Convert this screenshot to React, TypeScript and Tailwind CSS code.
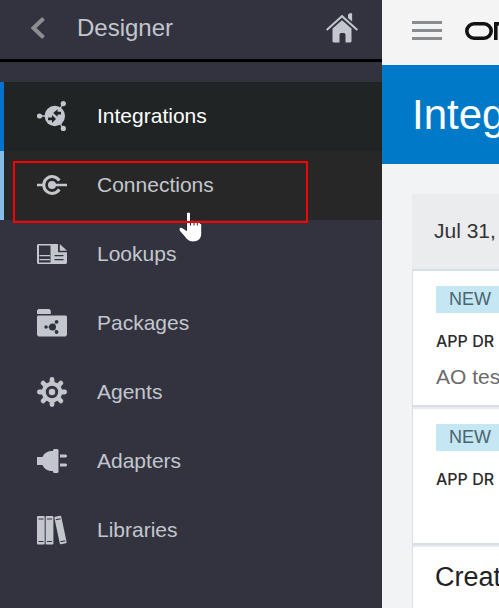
import type { ReactNode } from "react";

const INK = "#c3c7cd";

function IntegrationsIcon() {
  return (
    <svg width="30" height="30" viewBox="0 0 30 30" fill={INK} aria-hidden="true">
      <path d="M3 15h8M19 15l7-12.500M19 15l7 12.500" stroke={INK} strokeWidth="1.300" />
      <circle cx="2.500" cy="15" r="2.600" />
      <circle cx="26.300" cy="2.600" r="2.600" />
      <circle cx="26.300" cy="27.400" r="2.600" />
      <circle cx="17.800" cy="15" r="10.200" />
      <path
        fill="#202424"
        d="M24 10.800v2.600h-3.400v2.400l-4.400-3.700 4.400-3.800v2.500zM11 19.200v-2.600h4v-2.600l4 4-4 4v-2.800z"
      />
    </svg>
  );
}

function ConnectionsIcon() {
  return (
    <svg width="30" height="20" viewBox="0 0 30 20" fill="none" stroke={INK} aria-hidden="true">
      <path d="M22.300 5.600A8.400 8.400 0 1 0 22.300 14.400" strokeWidth="3" />
      <path d="M0 10h6M15 10h15" strokeWidth="2.600" />
      <circle cx="15" cy="10" r="4" fill={INK} stroke="none" />
    </svg>
  );
}

function LookupsIcon() {
  return (
    <svg width="30" height="20" viewBox="0 0 30 20" aria-hidden="true">
      <path fill={INK} d="M1 0h20l9 8v11l-1 1H1l-1-1V1z" />
      <path fill="#32333f" d="M2 1.500h11.500V18.500H2zM21 0h1l8 7v1.200H21zM17.500 11h9v1.300h-9zM17.500 15h9v1.300h-9z" />
      <path fill={INK} d="M22.800 0L30 6.800H22.800zM2.500 11h10.500v1.300H2.500zM2.500 15h10.500v1.300H2.500z" />
    </svg>
  );
}

function PackagesIcon() {
  return (
    <svg width="30" height="28" viewBox="0 0 30 28" aria-hidden="true">
      <path fill={INK} d="M0 5V1.500L1.500 0h10.700l1.600 1.500V5zM1 6.500h28l1 1V26l-1.500 1.500h-27L0 26V7.500z" />
      <path d="M9 18h6l4.500-5.300M15.500 18l4 5" fill="none" stroke="#32333f" strokeWidth="0.600" />
      <g fill="#32333f">
        <circle cx="15.500" cy="18" r="3.500" />
        <circle cx="9" cy="18" r="1.700" />
        <circle cx="19.600" cy="12.800" r="1.900" />
        <circle cx="19.600" cy="23" r="1.900" />
      </g>
    </svg>
  );
}

function AgentsIcon() {
  return (
    <svg width="30" height="30" viewBox="0 0 30 30" aria-hidden="true">
      <g stroke={INK} strokeWidth="4.800" strokeLinecap="round">
        <path d="M15 2.400v25.200M2.400 15h25.200M6.100 6.100l17.800 17.800M23.900 6.100L6.100 23.900" />
      </g>
      <circle cx="15" cy="15" r="10.300" fill={INK} />
      <circle cx="15" cy="15" r="4.700" fill={INK} stroke="#32333f" strokeWidth="3" />
    </svg>
  );
}

function AdaptersIcon() {
  return (
    <svg width="30" height="24" viewBox="0 0 30 24" fill={INK} aria-hidden="true">
      <path d="M0 8h5.500C7.500 3.800 10.500 2 16 2V1l1-1h3.500l1 1v22l-1 1H17l-1-1v-1c-5.500 0-8.500-1.800-10.500-6H0zM23 5.500h6l1 1v1l-1 1h-6zM23 14.500h6l1 1v1l-1 1h-6z" />
    </svg>
  );
}

function LibrariesIcon() {
  return (
    <svg width="30" height="30" viewBox="0 0 30 30" aria-hidden="true">
      <g fill={INK}>
        <rect x="0" y="1" width="7.700" height="28.500" rx="1" />
        <rect x="8.700" y="1" width="7.700" height="28.500" rx="1" />
        <rect x="20" y="1" width="7" height="28" rx="1" transform="rotate(-12 23.500 15)" />
      </g>
      <g stroke="#32333f" strokeWidth="1.100">
        <path d="M1.500 4h5M1.500 26.500h5M10 4h5M10 26.500h5" />
        <path d="M21 4h5M21 26.500h5" transform="rotate(-12 23.500 15)" />
      </g>
    </svg>
  );
}

function HomeIcon() {
  return (
    <svg width="32" height="30" viewBox="0 0 32 30" aria-hidden="true">
      <path fill={INK} d="M22 2l1-1.500L25.500 0l.6 1v7.500L22 5z" />
      <path fill={INK} d="M6.500 15.500L16 7.200l9.500 8.300V28.500l-1 1H19.500v-8l-1-1.500h-4l-1 1.500v8h-6l-1-1z" />
      <path fill="none" stroke={INK} strokeWidth="2" d="M.7 17L16 3.200 31.300 17" />
    </svg>
  );
}

function HandPointer() {
  return (
    <svg width="26" height="34" viewBox="0 0 26 34" aria-hidden="true">
      <path
        fill="#fff"
        stroke="#24252e"
        strokeWidth="1"
        d="M8.500 3C8.500 .5 12.500 .5 12.500 3V10c1-.8 2.800-.6 3.300.5 1-.7 2.800-.4 3.200.8 1-.5 2.600-.1 3 1 1 .2 1.800 1 1.800 2.200v8c0 5-3.500 8.500-9 8.500-3 0-5-1.300-6.800-3.500L2 20.500C-.3 17.500 2 15 5 17l3.500 2.500z"
      />
      <path stroke="#24252e" strokeWidth="1" d="M12.500 10v4.500M16 11v3.500M19.300 12v2.500" />
    </svg>
  );
}

type Item = { label: string; icon: ReactNode; state?: "active" | "hover" };

const items: Item[] = [
  { label: "Integrations", icon: <IntegrationsIcon />, state: "active" },
  { label: "Connections", icon: <ConnectionsIcon />, state: "hover" },
  { label: "Lookups", icon: <LookupsIcon /> },
  { label: "Packages", icon: <PackagesIcon /> },
  { label: "Agents", icon: <AgentsIcon /> },
  { label: "Adapters", icon: <AdaptersIcon /> },
  { label: "Libraries", icon: <LibrariesIcon /> },
];

function itemStyle(state: Item["state"]) {
  if (state === "active") return "border-[#0572ce] bg-[#202424] text-white";
  if (state === "hover") return "border-[#85bbe7] bg-[#272728] text-[#c3c7cd]";
  return "border-transparent text-[#c3c7cd]";
}

function Sidebar() {
  return (
    <aside className="w-[382px] shrink-0 bg-[#32333f]">
      <header className="flex h-[62px] items-center border-b-[3px] border-black pr-6 pb-1 pl-[30px] text-[#c3c7cd]">
        <button type="button" aria-label="Back">
          <svg width="15" height="22" viewBox="0 0 15 22" fill="none" aria-hidden="true">
            <path d="M13.500 1.500L3.500 11l10 9.500" stroke="#8b8f94" strokeWidth="4" />
          </svg>
        </button>
        <h2 className="ml-8 text-2xl">Designer</h2>
        <a href="#home" aria-label="Home" className="ml-auto">
          <HomeIcon />
        </a>
      </header>
      <nav className="relative pt-5">
        <ul>
          {items.map((item) => (
            <li key={item.label}>
              <a
                href={"#" + item.label.toLowerCase()}
                className={"flex h-[69px] items-center border-l-4 pb-0.5 pl-[33px] text-[21px] " + itemStyle(item.state)}
              >
                {item.icon}
                <span className="ml-[30px]">{item.label}</span>
              </a>
            </li>
          ))}
        </ul>
        <div className="pointer-events-none absolute top-[149px] left-[178px]">
          <HandPointer />
        </div>
        <div className="pointer-events-none absolute top-[99px] left-[13px] h-[62px] w-[295px] border-2 border-[#fb0000]" />
      </nav>
    </aside>
  );
}

function Entry({ note }: { note?: string }) {
  return (
    <li className="h-[138px] border-b-2 border-[#e8eaed] pl-[23px] shadow-[inset_0_-2px_0_#d6dfe8]">
      <div className="pt-[15px]">
        <span className="block h-[27px] w-24 bg-[#c5e7f3] pl-[13px] text-lg leading-[27px] text-[#4a6470]">NEW</span>
      </div>
      <h3 className="mt-[18px] font-[Inter,sans-serif] text-base leading-5 font-medium text-[#2c2c2c]">APP DR</h3>
      {note && <p className="mt-3 text-[21px] leading-7 text-[#6b6b6b]">{note}</p>}
    </li>
  );
}

function Content() {
  return (
    <main className="min-w-0 flex-1 overflow-hidden bg-[#f2f3f5] whitespace-nowrap">
      <header className="flex h-[65px] items-center bg-[#f4f4f4] pl-[30px]">
        <button type="button" aria-label="Menu" className="flex shrink-0 flex-col gap-[5px] pb-1">
          <span className="h-[3px] w-[30px] bg-[#898d91]" />
          <span className="h-[3px] w-[30px] bg-[#898d91]" />
          <span className="h-[3px] w-[30px] bg-[#898d91]" />
        </button>
        <svg className="ml-[23px] mb-1 shrink-0" width="34" height="18" viewBox="0 0 34 18" fill="none" stroke="#111" strokeWidth="3.600" role="img" aria-label="Logo">
          <rect x="1.800" y="1.800" width="24.400" height="14.400" rx="7.200" />
          <rect x="30.800" y="1.800" width="20" height="20" />
        </svg>
      </header>
      <div className="flex h-[99px] items-center bg-[#007ac8] pl-[30px] text-white">
        <h1 className="text-[42px]">Integ</h1>
      </div>
      <section className="mt-[30px] ml-[30px] border-l border-[#d6dfe8] bg-white">
        <div className="-ml-px flex h-[77px] items-center border-b-2 border-[#d6dfe8] bg-[#ebeced] pb-0.5 pl-[22px] text-[21px] text-[#333]">
          Jul 31,
        </div>
        <ul>
          <Entry note="AO tes" />
          <Entry />
        </ul>
        <h2 className="pt-3 pb-4 pl-[22px] text-[27px] leading-9 text-[#222]">Creat</h2>
      </section>
    </main>
  );
}

export default function App() {
  return (
    <div className="flex min-h-screen w-full font-['Liberation_Sans',Arial,sans-serif]">
      <Sidebar />
      <Content />
    </div>
  );
}
